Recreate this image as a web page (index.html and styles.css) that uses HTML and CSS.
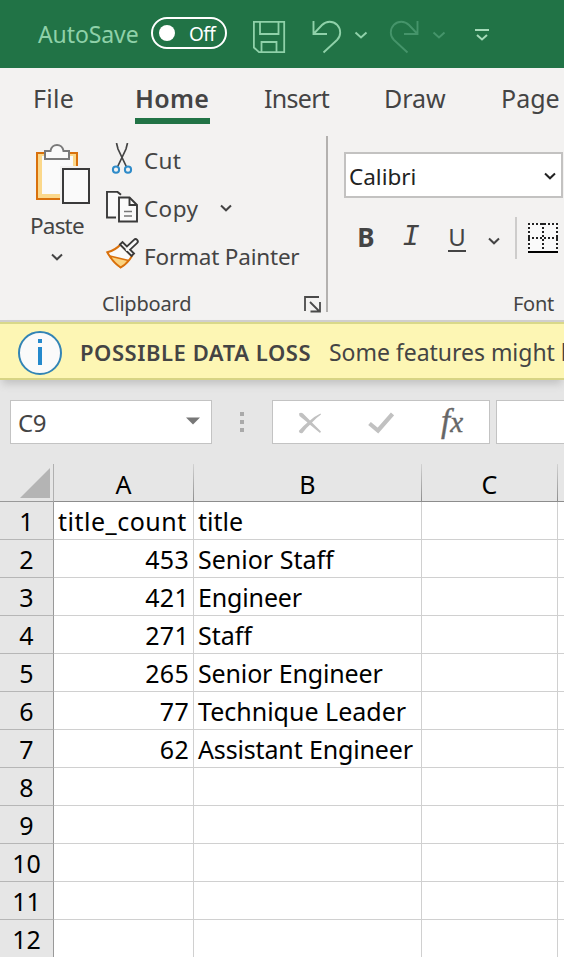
FILE: index.html
```
<!DOCTYPE html>
<html lang="en">
<head>
<meta charset="utf-8">
<title>Spreadsheet</title>
<link rel="stylesheet" href="styles.css">
</head>
<body>
<div class="app">
  <header class="titlebar">
    <span class="autosave">AutoSave</span>
    <span class="toggle"><i class="knob"></i><span class="toggle-text">Off</span></span>
    <svg class="save" width="34" height="34" viewBox="0 0 34 34" fill="none" stroke="#8fd1a9" stroke-width="1.8"><path d="M1.9 1.9H32.2V32.2H7L1.9 27.5ZM8 2V14H26.5V2M9.500 32V22H24.500V32"/></svg>
    <svg class="undo" width="30" height="34" viewBox="0 0 30 34" fill="none" stroke="#8fd1a9" stroke-width="1.9"><path d="M1.500 1V14H15M1.500 14L10 5C14.500.5 21 .8 25 4.700C29.500 9.500 29 16 25 20L11.500 32.500"/></svg>
    <svg class="chev-a" width="14" height="9" viewBox="0 0 14 9" fill="none" stroke="#8fd1a9" stroke-width="2"><path d="M1.500 1.500L7 6.500L12.500 1.500"/></svg>
    <svg class="redo" width="30" height="34" viewBox="0 0 30 34" fill="none" stroke="#45946a" stroke-width="1.9"><path d="M28.500 1V14H15M28.500 14L20 5C15.500.5 9 .8 5 4.700C.5 9.500 1 16 5 20L18.500 32.500"/></svg>
    <svg class="chev-b" width="14" height="9" viewBox="0 0 14 9" fill="none" stroke="#45946a" stroke-width="2"><path d="M1.500 1.500L7 6.500L12.500 1.500"/></svg>
    <svg class="customize" width="16" height="14" viewBox="0 0 16 14" fill="none" stroke="#a5dab9" stroke-width="2"><path d="M1 2H15M3 7L8 11.500L13 7"/></svg>
  </header>

  <nav class="tabs">
    <span class="tab file">File</span>
    <span class="tab home">Home</span>
    <span class="tab insert">Insert</span>
    <span class="tab draw">Draw</span>
    <span class="tab page">Page</span>
  </nav>

  <section class="ribbon">
    <div class="group clipboard">
      <div class="group-body">
        <div class="paste">
          <svg width="56" height="62" viewBox="0 0 56 62" fill="none"><path d="M2 9H42V55H2Z" fill="#fbd88b" stroke="#d9710c" stroke-width="2"/><path d="M7 12H38V50H7Z" fill="#fafafa"/><path d="M10 7H15.500C16.500-1 27.500-1 28.500 7H34V15H10Z" fill="#fafafa" stroke="#7a7a7a" stroke-width="2"/><path d="M25 22H56V62H25Z" fill="#f3f2f1"/><path d="M28 25H54V59H28Z" fill="#fafafa" stroke="#3a3a3a" stroke-width="2"/></svg>
          <span class="paste-label">Paste</span>
          <svg class="chev" width="14" height="9" viewBox="0 0 14 9"><path d="M2 1.500L7 6.300L12 1.500"/></svg>
        </div>
        <div class="commands">
          <div class="command">
            <svg class="cmd-icon" width="34" height="34" viewBox="0 0 34 34" fill="none"><path d="M10.500 0L12 6L20.300 23.500M21.500 0L20 6L11.700 23.500" stroke="#444" stroke-width="1.700"/><g stroke="#2e8bc9" stroke-width="2"><circle cx="10" cy="26.700" r="3.100"/><circle cx="22" cy="26.700" r="3.100"/></g></svg>
            <span class="cut">Cut</span>
          </div>
          <div class="command">
            <svg class="cmd-icon" width="34" height="34" viewBox="0 0 34 34" fill="none" stroke="#3a3a3a" stroke-width="1.900"><path d="M10 26.500H1V.9H11.500L15 3.800" fill="#fafafa"/><path d="M13 6.500H23.500L31 14V30.500H13Z" fill="#fafafa"/><path d="M23.500 6.500V14H31"/><path d="M18 20.500H26M18 25H26" stroke="#777" stroke-width="1.600"/></svg>
            <span class="copy">Copy</span>
            <svg class="chev copy-chev" width="14" height="9" viewBox="0 0 14 9"><path d="M2 1.500L7 6.300L12 1.500"/></svg>
          </div>
          <div class="command">
            <svg class="cmd-icon brush" width="34" height="34" viewBox="0 0 34 34" fill="none"><path d="M14.500 5.500C11 9.500 6 12 1.300 13.300C5 20 9 24.500 14.700 28.500C19 26 23 22 26 17Z" fill="#fafafa" stroke="#d9710c" stroke-width="2"/><path d="M3.800 17L22.500 21.500Q19 26 14.700 28.300Q8 24 3.800 17Z" fill="#fbd37f" stroke="#d9710c" stroke-width="1.600"/><path d="M22 9.500L29.500 2.500" stroke="#3a3a3a" stroke-width="6.400" stroke-linecap="round"/><path d="M14 5.500L16.500 3L28 14.500L25.500 17Z" fill="#fafafa" stroke="#3a3a3a" stroke-width="1.900"/><path d="M21 10.500L29.500 2.500" stroke="#fafafa" stroke-width="2.700" stroke-linecap="round"/></svg>
            <span class="painter">Format Painter</span>
          </div>
        </div>
      </div>
      <div class="group-foot">
        <span class="clip-label">Clipboard</span>
        <svg width="17" height="17" viewBox="0 0 17 17" fill="none" stroke="#4a4a4a" stroke-width="1.800"><path d="M15 1H1V15M6 6L15 15M16 6V15.500H6.500"/></svg>
      </div>
    </div>
    <div class="group font">
      <div class="select"><span class="font-name">Calibri</span><svg class="chev dark" width="14" height="9" viewBox="0 0 14 9"><path d="M2 1.500L7 6.300L12 1.500"/></svg></div>
      <div class="format-row">
        <span class="bold">B</span><span class="italic">I</span><span class="under">U</span>
        <svg class="chev under-chev" width="14" height="9" viewBox="0 0 14 9"><path d="M2 1.500L7 6.300L12 1.500"/></svg>
        <i class="rule"></i>
        <svg width="30" height="30" viewBox="0 0 30 30" fill="none" stroke="#222" stroke-width="2"><path d="M0 0H30V28H0Z" fill="#fafafa" stroke="none"/><path d="M0 1H30M1 0V28M29 0V28M15 0V28M0 15H30" stroke-dasharray="2 2"/><path d="M0 29H30" stroke="#000"/></svg>
      </div>
      <div class="font-label">Font</div>
    </div>
  </section>

  <section class="message">
    <svg width="44" height="44" viewBox="0 0 44 44"><circle cx="22" cy="22" r="21" fill="#fafafa" stroke="#3284b5" stroke-width="2"/><path d="M20 8H24V12H20ZM20 16H24V34H20Z" fill="#2489cc"/></svg>
    <strong class="msg-title">POSSIBLE DATA LOSS</strong>
    <span class="msg-text">Some features might b</span>
  </section>

  <section class="formula">
    <div class="namebox"><span class="cell-name">C9</span><svg width="16" height="8" viewBox="0 0 16 8"><path d="M1 .5H15L8 7.500Z" fill="#777"/></svg></div>
    <div class="dots"><i></i><i></i><i></i></div>
    <div class="entry">
      <svg class="cancel" width="24" height="22" viewBox="0 0 24 22" fill="#c1c1c1"><path d="M1 1.500Q3 0 5 1.500L12 8.500Q17 4 22.500 1.500L23 2.500Q18 6 14 10.500L23 19.500L22 21L12 12.800Q8 16 4.500 21Q1.500 22 .8 19Q5 14 9.500 10.500L1.500 4Z"/></svg>
      <svg class="accept" width="26" height="22" viewBox="0 0 26 22" fill="none" stroke="#c1c1c1" stroke-width="4.200"><path d="M1.500 11.500L10 18.500L24.500 2"/></svg>
      <span class="fx"><span class="fx-f">f</span><span class="fx-x">x</span></span>
    </div>
    <div class="input"></div>
  </section>

  <main class="sheet">
    <div class="corner"><svg width="30" height="30" viewBox="0 0 30 30"><path d="M30 0V30H0Z" fill="#b4b4b4"/></svg></div><div class="col">A</div><div class="col">B</div><div class="col">C</div><div class="col"></div>
    <div class="row">1</div><div class="cell head">title_count</div><div class="cell">title</div><div class="cell"></div><div class="cell"></div>
    <div class="row">2</div><div class="cell num">453</div><div class="cell">Senior Staff</div><div class="cell"></div><div class="cell"></div>
    <div class="row">3</div><div class="cell num">421</div><div class="cell tight">Engineer</div><div class="cell"></div><div class="cell"></div>
    <div class="row">4</div><div class="cell num">271</div><div class="cell">Staff</div><div class="cell"></div><div class="cell"></div>
    <div class="row">5</div><div class="cell num">265</div><div class="cell tight">Senior Engineer</div><div class="cell"></div><div class="cell"></div>
    <div class="row">6</div><div class="cell num">77</div><div class="cell">Technique Leader</div><div class="cell"></div><div class="cell"></div>
    <div class="row">7</div><div class="cell num">62</div><div class="cell tight">Assistant Engineer</div><div class="cell"></div><div class="cell"></div>
    <div class="row">8</div><div class="cell"></div><div class="cell"></div><div class="cell"></div><div class="cell"></div>
    <div class="row">9</div><div class="cell"></div><div class="cell"></div><div class="cell"></div><div class="cell"></div>
    <div class="row">10</div><div class="cell"></div><div class="cell"></div><div class="cell"></div><div class="cell"></div>
    <div class="row">11</div><div class="cell"></div><div class="cell"></div><div class="cell"></div><div class="cell"></div>
    <div class="row">12</div><div class="cell"></div><div class="cell"></div><div class="cell"></div><div class="cell"></div>
  </main>
</div>
</body>
</html>
```
FILE: styles.css
```
* { box-sizing: border-box; }
body { margin: 0; font-family: "Noto Sans", "Open Sans", sans-serif; color: #444; overflow: hidden; }
.app { width: 564px; height: 957px; overflow: hidden; background: #e6e6e6; }
svg { display: block; flex: none; }
span { white-space: nowrap; }
i { display: block; }

.titlebar { height: 68px; background: #217346; display: flex; align-items: flex-start; padding-left: 38px; }
.autosave { width: 113px; margin-top: 17px; line-height: 34px; font-size: 23px; letter-spacing: -0.1px; color: #8fd1a9; }
.toggle { flex: none; width: 76px; height: 32px; margin-top: 17px; border: 2px solid #fff; border-radius: 16px; display: flex; align-items: center; padding-left: 6px; color: #fff; }
.knob { width: 16px; height: 16px; border-radius: 50%; background: #fff; }
.toggle-text { margin-left: 14px; font-size: 19px; line-height: 28px; padding-top: 2px; letter-spacing: -0.6px; }
.save { margin: 20px 0 0 25px; }
.undo { margin: 20px 0 0 26px; }
.chev-a { margin: 31px 0 0 12px; }
.redo { margin: 20px 0 0 21px; }
.chev-b { margin: 31px 0 0 13px; }
.customize { margin: 28px 0 0 28px; }

.tabs { height: 68px; background: #f3f2f1; display: flex; padding-left: 33px; }
.tab { flex: none; height: 56px; line-height: 36px; padding-top: 12px; font-size: 25px; }
.file { width: 102px; letter-spacing: 0.3px; }
.home { width: 75px; margin-right: 54px; font-weight: 600; letter-spacing: 0.3px; border-bottom: 6px solid #217346; }
.insert { width: 120px; letter-spacing: -0.7px; }
.draw { width: 117px; }

.ribbon { height: 184px; background: #f3f2f1; display: flex; font-size: 22.5px; }
.group.clipboard { width: 328px; height: 176px; border-right: 2px solid #b3b1af; }
.group-body { display: flex; height: 150px; }
.paste { width: 106px; padding: 8px 0 0 35px; }
.paste-label { display: block; margin: 4px 0 0 -5px; line-height: 32px; letter-spacing: -0.8px; }
.paste .chev { margin: 11px 0 0 15px; }
.chev { fill: none; stroke: #444; stroke-width: 2; }
.chev.dark { stroke: #222; }
.command { height: 48px; display: flex; align-items: center; line-height: 34px; }
.command span { padding-top: 2px; }
.cmd-icon { margin-right: 4px; }
.brush { overflow: visible; }
.cut { letter-spacing: 0.3px; }
.copy { letter-spacing: 0.4px; }
.painter { letter-spacing: -0.2px; }
.copy-chev { margin-left: 21px; }
.group-foot { height: 26px; display: flex; justify-content: space-between; padding: 0 5px 0 102px; font-size: 20px; line-height: 36px; }
.clip-label { letter-spacing: -0.2px; }
.group-foot svg { margin-top: 10px; }
.group.font { padding: 16px 0 0 16px; }
.select { width: 219px; height: 46px; border: 2px solid #c3c2c1; background: #fff; color: #222; display: flex; align-items: center; justify-content: space-between; padding: 2px 4px 0 3px; }
.format-row { width: 220px; height: 50px; margin-top: 15px; display: flex; align-items: center; }
.bold, .italic, .under { display: block; text-align: center; font-size: 24px; line-height: 34px; }
.bold { width: 44px; margin-top: -2px; font-size: 26px; font-weight: 700; }
.italic { width: 46px; margin-top: -1px; font-family: "Liberation Mono", monospace; font-style: italic; font-size: 29px; }
.under { width: 18px; margin-left: 14px; line-height: 26px; border-bottom: 2px solid #444; }
.under-chev { margin: 6px 0 0 21px; }
.rule { width: 2px; height: 42px; background: #cdcccb; margin: 0 11px 0 14px; }
.font-label { font-size: 20px; line-height: 36px; padding-left: 169px; margin-top: 23px; letter-spacing: -0.3px; }

.message { height: 60px; background: #fdf6b4; border-top: 2px solid #d1cfce; border-bottom: 2px solid #d7d485; box-shadow: inset 0 2px #d9d88a, 0 6px 8px -2px #c2c2c2; display: flex; align-items: center; padding: 5px 0 0 18px; font-size: 23px; line-height: 32px; }
.message span, .message strong { margin-top: -2px; }
.message .msg-title { flex: none; width: 249px; margin-left: 18px; font-weight: 600; white-space: nowrap; letter-spacing: 0.55px; }
.msg-title { font-size: 22px; }
.msg-text { letter-spacing: -0.03px; }

.formula { height: 84px; display: flex; padding: 20px 0 0 10px; }
.formula > div { flex: none; }
.namebox, .entry, .input { height: 44px; background: #fff; border: 1px solid #c3c3c3; }
.namebox { width: 202px; display: flex; justify-content: space-between; align-items: center; padding: 0 10px 0 7px; font-size: 24px; }
.cell-name { letter-spacing: -0.4px; }
.namebox svg { margin-bottom: 2px; }
.dots { width: 4px; margin: 12px 28px 0 28px; display: grid; gap: 4px; align-content: start; }
.dots i { width: 4px; height: 4px; background: #aaa; }
.entry { width: 218px; display: flex; padding-left: 25px; }
.cancel { margin-top: 11px; }
.accept { margin: 11px 0 0 46px; }
.fx { margin-left: 47px; font-family: "Liberation Serif", serif; font-style: italic; color: #666; line-height: 40px; -webkit-text-stroke: 0.4px #666; }
.fx-f { font-size: 33px; }
.fx-x { font-size: 29px; }
.input { width: 80px; margin-left: 6px; }

.sheet { display: grid; grid-template-columns: 54px 140px 228px 136px 140px; grid-template-rows: 38px; grid-auto-rows: 38px; width: 698px; background: #fff; color: #000; font-size: 25px; line-height: 39px; }
.corner, .col, .row { background: #e6e6e6; }
.corner { border-right: 1px solid #b0b0b0; border-bottom: 1px solid #999; padding: 4px 0 0 20px; }
.col { text-align: center; border-right: 1px solid; border-image: linear-gradient(#d4d4d4, #8c8c8c) 1; border-bottom: 1px solid #999; line-height: 40px; }
.row { text-align: center; border-right: 1px solid #999; border-bottom: 1px solid #b6b6b6; line-height: 38px; }
.cell { border-right: 1px solid #d0d0d0; border-bottom: 1px solid #d0d0d0; padding: 0 4px; white-space: nowrap; }
.head { letter-spacing: 0.5px; }
.tight { letter-spacing: -0.15px; }
.num { text-align: right; letter-spacing: 0.3px; }
```
